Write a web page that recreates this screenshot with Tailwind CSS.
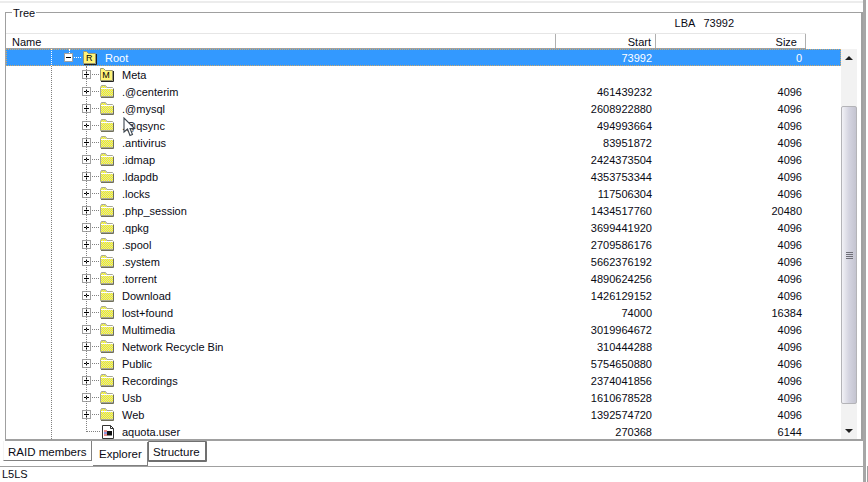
<!DOCTYPE html>
<html>
<head>
<meta charset="utf-8">
<script src="https://cdn.jsdelivr.net/npm/@tailwindcss/browser@4"></script>
</head>
<body class="bg-white overflow-hidden">
<svg width="0" height="0" class="absolute">
  <defs>
    <pattern id="dy" width="2" height="2" patternUnits="userSpaceOnUse"><rect width="2" height="2" fill="#ffff00"/><rect width="1" height="1" fill="#d4d4c4"/><rect x="1" y="1" width="1" height="1" fill="#d4d4c4"/></pattern>
    <pattern id="dl" width="2" height="2" patternUnits="userSpaceOnUse"><rect width="2" height="2" fill="#ffff66"/><rect width="1" height="1" fill="#ffe98a"/><rect x="1" y="1" width="1" height="1" fill="#ffe98a"/></pattern>
    <symbol id="folder" viewBox="0 0 14 13"><path d="M0.5 11.5V2.5L1.5 0.5H5.5L7 2.5H12.5L13.5 3.5V11.5Z" fill="url(#dy)" stroke="#a8a898"/><path d="M1 3.5H13" stroke="#fff"/><path d="M1 12.5H13.5V4" stroke="#70705c" fill="none"/></symbol>
    <symbol id="lfolder" viewBox="0 0 14 14"><path d="M0.5 12.5V0.5H3.5L5.5 2.5H12.5V12.5Z" fill="url(#dl)" stroke="#9a9a70"/><path d="M1 13.5H13.5V3" stroke="#222" fill="none"/></symbol>
    <symbol id="plus" viewBox="0 0 18 9"><rect x="0.5" y="0.5" width="8" height="8" fill="#fff" stroke="#a0a0a0"/><path d="M2 4.5H7M4.5 2V7" stroke="#000"/><path d="M10 4.5H17" stroke="#808080" stroke-dasharray="1 1"/></symbol>
    <symbol id="minus" viewBox="0 0 18 9"><rect x="0.5" y="0.5" width="8" height="8" fill="#fff" stroke="#a0a0a0"/><path d="M2 4.5H7" stroke="#000"/><path d="M10 4.5H18" stroke="#fff" stroke-dasharray="1 1"/></symbol>
  </defs>
</svg>
<div class="relative w-[868px] h-[482px] flex font-['Liberation_Sans',sans-serif] text-[11px] leading-[19px] text-[#0a0a14] overflow-hidden">
  <div class="w-[866px] h-[482px] shrink-0 flex flex-col border-r-[3px] border-[#a6a6a6]">
    <div class="h-[441px] shrink-0 pt-[1px]">
      <div class="h-[2px] bg-[#ececec]"></div>
      <div class="pt-[9px] pl-[5px]">
        <div class="relative w-[858px] h-[429px] border border-[#a0a0a0] border-r-2 border-b-2">
          <span class="absolute left-[6px] -top-[7px] bg-white px-[1px] leading-[14px]">Tree</span>
          <div class="h-[20px] flex justify-end pr-[127px] items-center leading-[14px]"><span>LBA</span><span class="ml-[8px]">73992</span></div>
          <div class="h-[16px] flex border-t border-b border-[#e6e6e6] border-b-[#a0a0a0] leading-[16px] w-[800px]">
            <div class="w-[550px] pl-[6px] border-r border-[#b0b0b0]">Name</div>
            <div class="w-[100px] text-right pr-[4px] border-r border-[#b0b0b0]">Start</div>
            <div class="w-[150px] text-right pr-[8px] border-r border-[#b0b0b0]">Size</div>
          </div>
          <div class="flex h-[390px]">
            <div class="relative w-[835px] h-[390px] overflow-hidden shrink-0">
              <span class="absolute left-[45px] top-0 bottom-0 border-l border-dotted border-[#808080]"></span>
              <span class="absolute left-[80px] top-[17px] h-[366px] border-l border-dotted border-[#808080]"></span>

              <div class="relative h-[17px] flex bg-[#3399ff] text-white outline outline-dotted -outline-offset-1 outline-[#d0a868]">
                <span class="absolute left-[45px] top-0 bottom-0 border-l border-dotted border-white"></span>
                <span class="absolute left-[63px] top-0 h-[4px] border-l border-dotted border-white"></span>
                <div class="w-[550px] flex items-center pl-[58px]">
                  <svg class="w-[19px] h-[9px]" viewBox="0 0 19 9"><use href="#minus" width="18" height="9"/></svg>
                  <svg class="w-[14px] h-[14px]" viewBox="0 0 14 14"><use href="#lfolder"/><text x="3" y="10" font-size="9" font-family="Liberation Sans" fill="#000">R</text></svg>
                  <span class="ml-[8px] mt-[2px]">Root</span>
                </div>
                <div class="w-[100px] text-right pr-[4px]">73992</div>
                <div class="w-[150px] text-right pr-[4px]">0</div>
              </div>

              <div class="h-[17px] flex"><div class="w-[550px] flex items-center pl-[76px]"><svg class="w-[18px] h-[9px]"><use href="#plus"/></svg><svg class="w-[14px] h-[14px]" viewBox="0 0 14 14"><use href="#lfolder"/><text x="2.2" y="10" font-size="9" font-family="Liberation Sans" fill="#000">M</text></svg><span class="ml-[8px] mt-[2px]">Meta</span></div></div>

              <div class="h-[17px] flex"><div class="w-[550px] flex items-center pl-[76px]"><svg class="w-[18px] h-[9px]"><use href="#plus"/></svg><svg class="w-[14px] h-[13px]"><use href="#folder"/></svg><span class="ml-[8px] mt-[2px]">.@centerim</span></div><div class="w-[100px] text-right pr-[4px]">461439232</div><div class="w-[150px] text-right pr-[4px]">4096</div></div>
              <div class="h-[17px] flex"><div class="w-[550px] flex items-center pl-[76px]"><svg class="w-[18px] h-[9px]"><use href="#plus"/></svg><svg class="w-[14px] h-[13px]"><use href="#folder"/></svg><span class="ml-[8px] mt-[2px]">.@mysql</span></div><div class="w-[100px] text-right pr-[4px]">2608922880</div><div class="w-[150px] text-right pr-[4px]">4096</div></div>
              <div class="h-[17px] flex"><div class="w-[550px] flex items-center pl-[76px]"><svg class="w-[18px] h-[9px]"><use href="#plus"/></svg><svg class="w-[14px] h-[13px]"><use href="#folder"/></svg><span class="ml-[8px] mt-[2px]">.@qsync</span></div><div class="w-[100px] text-right pr-[4px]">494993664</div><div class="w-[150px] text-right pr-[4px]">4096</div></div>
              <div class="h-[17px] flex"><div class="w-[550px] flex items-center pl-[76px]"><svg class="w-[18px] h-[9px]"><use href="#plus"/></svg><svg class="w-[14px] h-[13px]"><use href="#folder"/></svg><span class="ml-[8px] mt-[2px]">.antivirus</span></div><div class="w-[100px] text-right pr-[4px]">83951872</div><div class="w-[150px] text-right pr-[4px]">4096</div></div>
              <div class="h-[17px] flex"><div class="w-[550px] flex items-center pl-[76px]"><svg class="w-[18px] h-[9px]"><use href="#plus"/></svg><svg class="w-[14px] h-[13px]"><use href="#folder"/></svg><span class="ml-[8px] mt-[2px]">.idmap</span></div><div class="w-[100px] text-right pr-[4px]">2424373504</div><div class="w-[150px] text-right pr-[4px]">4096</div></div>
              <div class="h-[17px] flex"><div class="w-[550px] flex items-center pl-[76px]"><svg class="w-[18px] h-[9px]"><use href="#plus"/></svg><svg class="w-[14px] h-[13px]"><use href="#folder"/></svg><span class="ml-[8px] mt-[2px]">.ldapdb</span></div><div class="w-[100px] text-right pr-[4px]">4353753344</div><div class="w-[150px] text-right pr-[4px]">4096</div></div>
              <div class="h-[17px] flex"><div class="w-[550px] flex items-center pl-[76px]"><svg class="w-[18px] h-[9px]"><use href="#plus"/></svg><svg class="w-[14px] h-[13px]"><use href="#folder"/></svg><span class="ml-[8px] mt-[2px]">.locks</span></div><div class="w-[100px] text-right pr-[4px]">117506304</div><div class="w-[150px] text-right pr-[4px]">4096</div></div>
              <div class="h-[17px] flex"><div class="w-[550px] flex items-center pl-[76px]"><svg class="w-[18px] h-[9px]"><use href="#plus"/></svg><svg class="w-[14px] h-[13px]"><use href="#folder"/></svg><span class="ml-[8px] mt-[2px]">.php_session</span></div><div class="w-[100px] text-right pr-[4px]">1434517760</div><div class="w-[150px] text-right pr-[4px]">20480</div></div>
              <div class="h-[17px] flex"><div class="w-[550px] flex items-center pl-[76px]"><svg class="w-[18px] h-[9px]"><use href="#plus"/></svg><svg class="w-[14px] h-[13px]"><use href="#folder"/></svg><span class="ml-[8px] mt-[2px]">.qpkg</span></div><div class="w-[100px] text-right pr-[4px]">3699441920</div><div class="w-[150px] text-right pr-[4px]">4096</div></div>
              <div class="h-[17px] flex"><div class="w-[550px] flex items-center pl-[76px]"><svg class="w-[18px] h-[9px]"><use href="#plus"/></svg><svg class="w-[14px] h-[13px]"><use href="#folder"/></svg><span class="ml-[8px] mt-[2px]">.spool</span></div><div class="w-[100px] text-right pr-[4px]">2709586176</div><div class="w-[150px] text-right pr-[4px]">4096</div></div>
              <div class="h-[17px] flex"><div class="w-[550px] flex items-center pl-[76px]"><svg class="w-[18px] h-[9px]"><use href="#plus"/></svg><svg class="w-[14px] h-[13px]"><use href="#folder"/></svg><span class="ml-[8px] mt-[2px]">.system</span></div><div class="w-[100px] text-right pr-[4px]">5662376192</div><div class="w-[150px] text-right pr-[4px]">4096</div></div>
              <div class="h-[17px] flex"><div class="w-[550px] flex items-center pl-[76px]"><svg class="w-[18px] h-[9px]"><use href="#plus"/></svg><svg class="w-[14px] h-[13px]"><use href="#folder"/></svg><span class="ml-[8px] mt-[2px]">.torrent</span></div><div class="w-[100px] text-right pr-[4px]">4890624256</div><div class="w-[150px] text-right pr-[4px]">4096</div></div>
              <div class="h-[17px] flex"><div class="w-[550px] flex items-center pl-[76px]"><svg class="w-[18px] h-[9px]"><use href="#plus"/></svg><svg class="w-[14px] h-[13px]"><use href="#folder"/></svg><span class="ml-[8px] mt-[2px]">Download</span></div><div class="w-[100px] text-right pr-[4px]">1426129152</div><div class="w-[150px] text-right pr-[4px]">4096</div></div>
              <div class="h-[17px] flex"><div class="w-[550px] flex items-center pl-[76px]"><svg class="w-[18px] h-[9px]"><use href="#plus"/></svg><svg class="w-[14px] h-[13px]"><use href="#folder"/></svg><span class="ml-[8px] mt-[2px]">lost+found</span></div><div class="w-[100px] text-right pr-[4px]">74000</div><div class="w-[150px] text-right pr-[4px]">16384</div></div>
              <div class="h-[17px] flex"><div class="w-[550px] flex items-center pl-[76px]"><svg class="w-[18px] h-[9px]"><use href="#plus"/></svg><svg class="w-[14px] h-[13px]"><use href="#folder"/></svg><span class="ml-[8px] mt-[2px]">Multimedia</span></div><div class="w-[100px] text-right pr-[4px]">3019964672</div><div class="w-[150px] text-right pr-[4px]">4096</div></div>
              <div class="h-[17px] flex"><div class="w-[550px] flex items-center pl-[76px]"><svg class="w-[18px] h-[9px]"><use href="#plus"/></svg><svg class="w-[14px] h-[13px]"><use href="#folder"/></svg><span class="ml-[8px] mt-[2px]">Network Recycle Bin</span></div><div class="w-[100px] text-right pr-[4px]">310444288</div><div class="w-[150px] text-right pr-[4px]">4096</div></div>
              <div class="h-[17px] flex"><div class="w-[550px] flex items-center pl-[76px]"><svg class="w-[18px] h-[9px]"><use href="#plus"/></svg><svg class="w-[14px] h-[13px]"><use href="#folder"/></svg><span class="ml-[8px] mt-[2px]">Public</span></div><div class="w-[100px] text-right pr-[4px]">5754650880</div><div class="w-[150px] text-right pr-[4px]">4096</div></div>
              <div class="h-[17px] flex"><div class="w-[550px] flex items-center pl-[76px]"><svg class="w-[18px] h-[9px]"><use href="#plus"/></svg><svg class="w-[14px] h-[13px]"><use href="#folder"/></svg><span class="ml-[8px] mt-[2px]">Recordings</span></div><div class="w-[100px] text-right pr-[4px]">2374041856</div><div class="w-[150px] text-right pr-[4px]">4096</div></div>
              <div class="h-[17px] flex"><div class="w-[550px] flex items-center pl-[76px]"><svg class="w-[18px] h-[9px]"><use href="#plus"/></svg><svg class="w-[14px] h-[13px]"><use href="#folder"/></svg><span class="ml-[8px] mt-[2px]">Usb</span></div><div class="w-[100px] text-right pr-[4px]">1610678528</div><div class="w-[150px] text-right pr-[4px]">4096</div></div>
              <div class="h-[17px] flex"><div class="w-[550px] flex items-center pl-[76px]"><svg class="w-[18px] h-[9px]"><use href="#plus"/></svg><svg class="w-[14px] h-[13px]"><use href="#folder"/></svg><span class="ml-[8px] mt-[2px]">Web</span></div><div class="w-[100px] text-right pr-[4px]">1392574720</div><div class="w-[150px] text-right pr-[4px]">4096</div></div>
              <div class="h-[17px] flex"><div class="w-[550px] flex items-center pl-[81px]"><span class="w-[13px] border-t border-dotted border-[#808080]"></span>
                <svg class="w-[14px] h-[14px] ml-[1px]" viewBox="0 0 14 14"><path d="M1.5 .5H9.5L12.5 3.5V13.5H1.5Z" fill="#fff" stroke="#333"/><path d="M9.5 .5V3.5H12.5" fill="none" stroke="#333"/><path d="M3 6H6M3 10H6" stroke="#d01818"/><path d="M3 8H6" stroke="#2030c0"/><path d="M6 6H11V10.5H6Z" fill="#101010"/></svg><span class="ml-[7px] mt-[2px]">aquota.user</span></div><div class="w-[100px] text-right pr-[4px]">270368</div><div class="w-[150px] text-right pr-[4px]">6144</div></div>

              <svg class="absolute left-[117px] top-[68px] w-[14px] h-[20px]" viewBox="0 0 14 20"><path d="M1 1V15L4.5 12L7 18.5L9.5 17.5L7 11.5H11.5Z" fill="#fff" stroke="#3c4650" stroke-width="1.1"/></svg>
            </div>

            <div class="w-[16px] h-[390px] flex flex-col bg-[#f2f2f2]">
              <div class="h-[17px] flex items-center justify-center"><span class="w-0 h-0 border-x-[4px] border-x-transparent border-b-[4px] border-b-[#202020]"></span></div>
              <div class="h-[40px] shrink-0"></div>
              <div class="h-[298px] shrink-0 flex items-center justify-center border border-[#b4b4b8] rounded-[2px] bg-gradient-to-r from-[#f2f2f6] via-[#d4d4e0] to-[#c4c4d0]">
                <div class="w-[7px] h-[7px] flex flex-col justify-between"><span class="h-px bg-[#707078]"></span><span class="h-px bg-[#707078]"></span><span class="h-px bg-[#707078]"></span><span class="h-px bg-[#707078]"></span></div>
              </div>
              <div class="flex-1"></div>
              <div class="h-[17px] flex items-center justify-center"><span class="w-0 h-0 border-x-[4px] border-x-transparent border-t-[4px] border-t-[#202020]"></span></div>
            </div>
          </div>
        </div>
      </div>
    </div>
    <div class="h-[25px] shrink-0 flex items-start pl-[3px] leading-[14px] text-[11.5px]">
      <div class="w-[89px] h-[20px] pl-[4px] pt-[4px] text-left border-l border-l-[#f4f4f4] border-r border-b border-[#808080]">RAID members</div>
      <div class="ml-[1px] w-[55px] h-[24px] mt-[1px] pl-[6px] pt-[5px] border-r border-b border-[#808080]">Explorer</div>
      <div class="w-[59px] h-[21px] pl-[4px] pt-[3px] border border-[#707070] border-r-2 border-b-2 rounded-[1px]">Structure</div>
    </div>
    <div class="flex-1 border-t border-[#a0a0a0] pl-[2px] leading-[15px]">L5LS</div>
  </div>
  <div class="ml-[1px] mt-[466px] w-px bg-[#a0a0a0]"></div>
</div>
</body>
</html>
